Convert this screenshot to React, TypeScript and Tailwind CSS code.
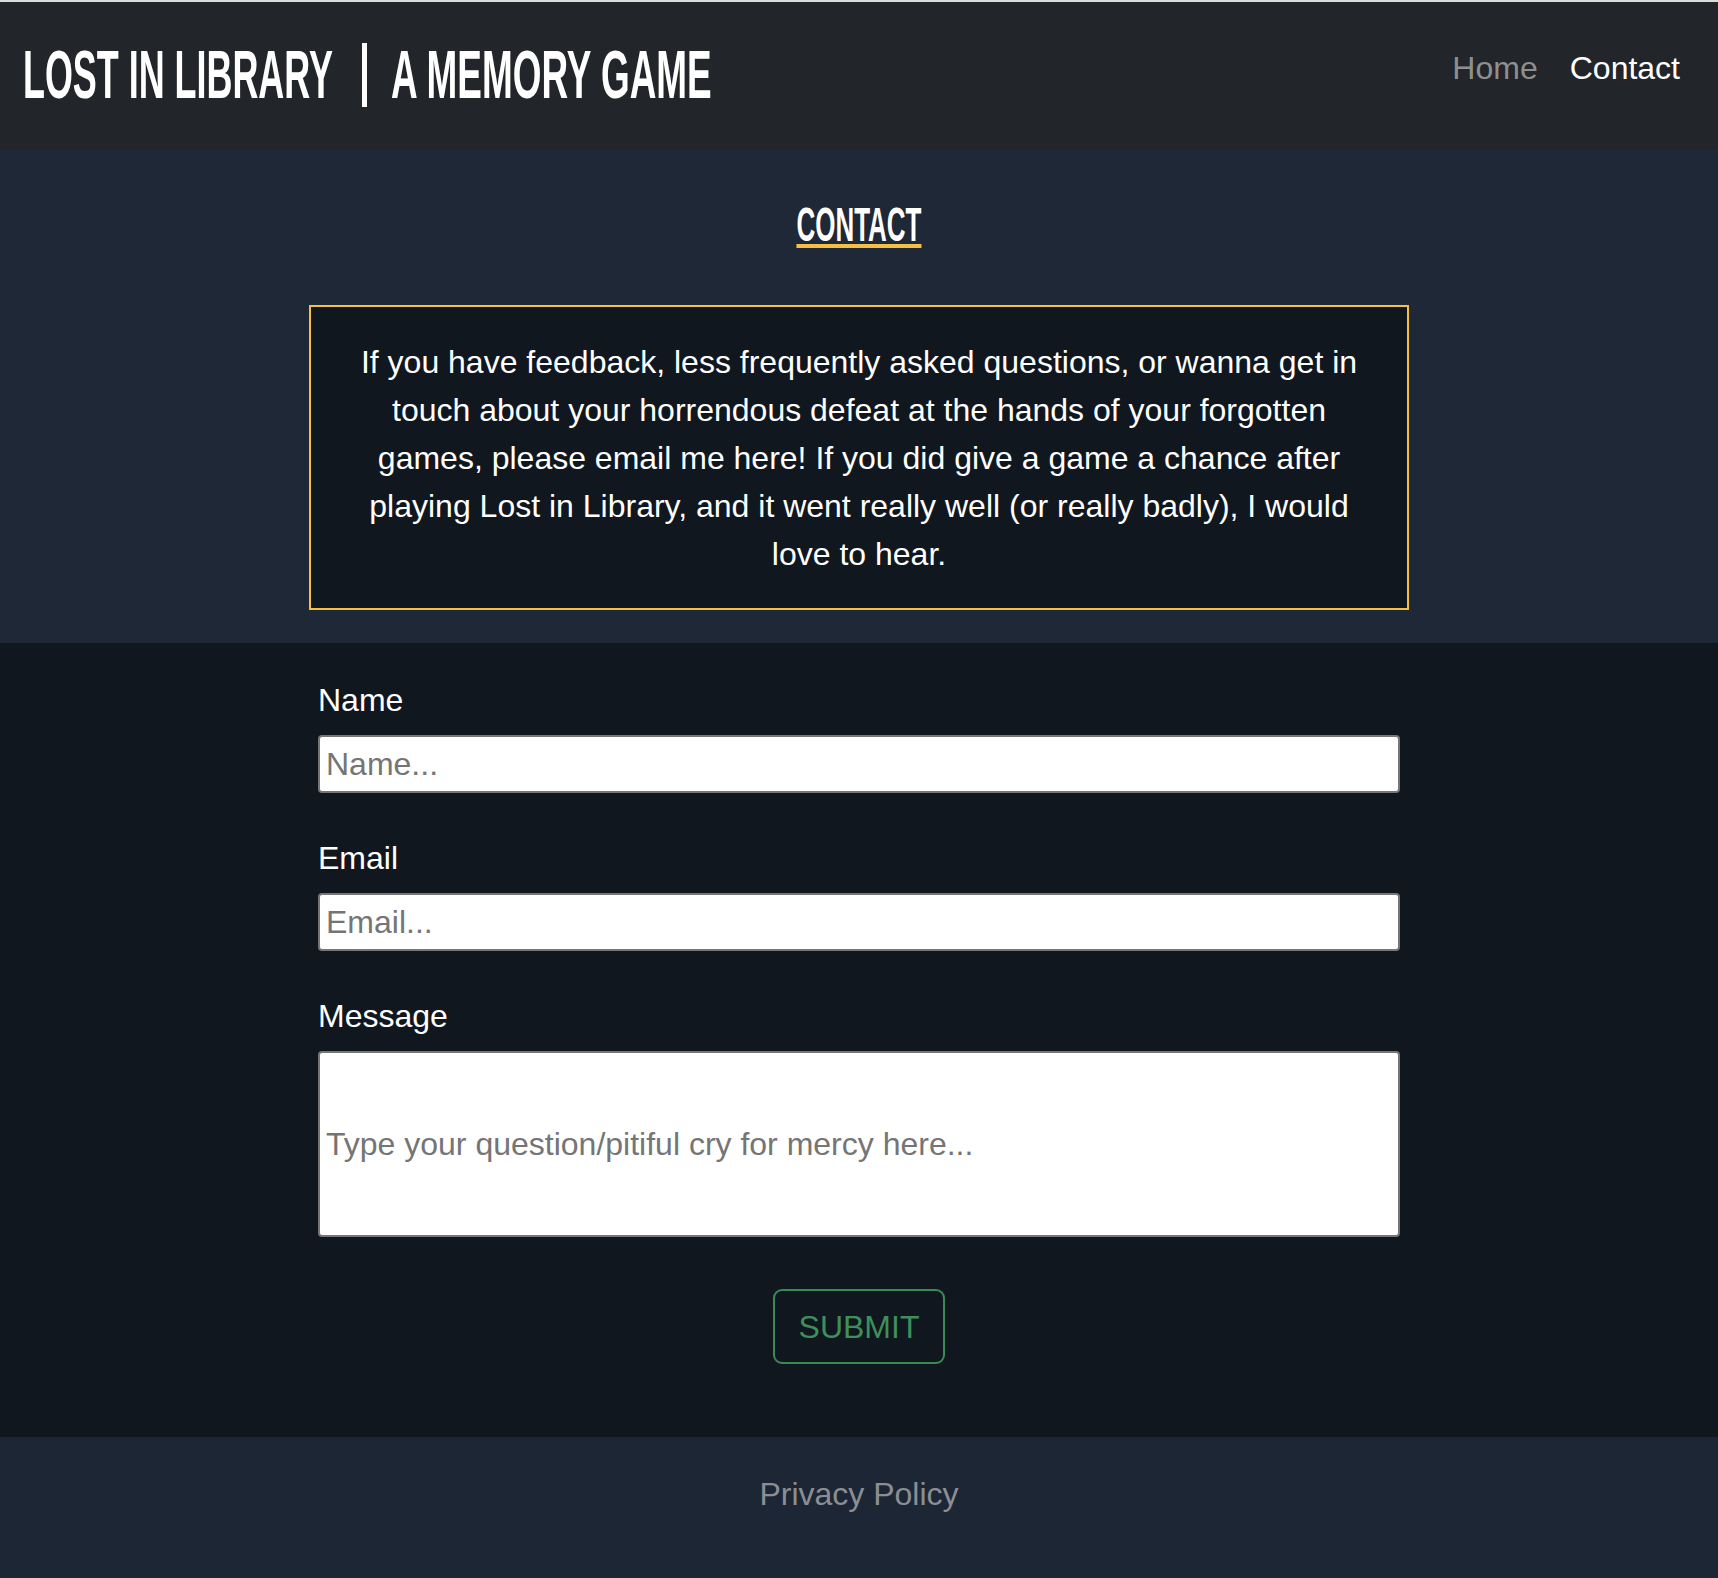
import React from "react";

export default function App() {
  return (
    <div className="font-['Liberation_Sans',Arial,sans-serif] text-white">
      <div className="h-[2px] bg-[#dcdcdc]" />
      <header className="h-[148px] bg-[#222529] flex items-start justify-between pl-[23px] pr-[38px]">
        <div className="flex items-start mt-[38px]">
          <div className="w-[309px] h-[68px]">
            <span className="inline-block origin-left scale-x-[0.528] whitespace-nowrap font-bold text-[68px] leading-[68px]">
              LOST IN LIBRARY
            </span>
          </div>
          <div className="ml-[30px] mt-[3px] w-[5px] h-[64px] bg-white" />
          <div className="ml-[24px] w-[320px] h-[68px]">
            <span className="inline-block origin-left scale-x-[0.543] whitespace-nowrap font-bold text-[68px] leading-[68px]">
              A MEMORY GAME
            </span>
          </div>
        </div>
        <nav className="flex items-start gap-[32px] mt-[42px] text-[32px] leading-[48px]">
          <a className="text-[#8e8f91]">Home</a>
          <a className="text-white">Contact</a>
        </nav>
      </header>

      <section className="bg-[#1e2836] pt-[50px] pb-[33px]">
        <div className="text-center h-[49px]">
          <h1 className="inline-block origin-center scale-x-[0.53] whitespace-nowrap font-bold text-[49px] leading-[49px] underline decoration-[#f4bf42] decoration-[4px] underline-offset-[3px]">
            CONTACT
          </h1>
        </div>
        <div className="mt-[56px] mx-auto w-[1100px] border-2 border-[#f4bf42] bg-[#10171f] px-[32px] pt-[31px] pb-[30px] text-center text-[32px] leading-[48px]">
          If you have feedback, less frequently asked questions, or wanna get in touch about your horrendous defeat at the hands of your forgotten games, please email me here! If you did give a game a chance after playing Lost in Library, and it went really well (or really badly), I would love to hear.
        </div>
      </section>

      <section className="bg-[#10171f] pt-[34px] pb-[73px]">
        <form className="w-[1082px] mx-auto flex flex-col" onSubmit={(e) => e.preventDefault()}>
          <label className="block text-[32px] leading-[46px] mb-[12px]">Name</label>
          <input
            type="text"
            placeholder="Name..."
            className="h-[58px] w-full bg-white border-2 border-[#767676] rounded-[4px] pl-[6px] text-[32px] text-black placeholder:text-[#757575] outline-none"
          />
          <label className="block text-[32px] leading-[46px] mb-[12px] mt-[42px]">Email</label>
          <input
            type="text"
            placeholder="Email..."
            className="h-[58px] w-full bg-white border-2 border-[#767676] rounded-[4px] pl-[6px] text-[32px] text-black placeholder:text-[#757575] outline-none"
          />
          <label className="block text-[32px] leading-[46px] mb-[12px] mt-[42px]">Message</label>
          <input
            type="text"
            placeholder="Type your question/pitiful cry for mercy here..."
            className="h-[186px] w-full bg-white border-2 border-[#767676] rounded-[4px] pl-[6px] text-[32px] text-black placeholder:text-[#757575] outline-none"
          />
          <div className="flex justify-center mt-[52px]">
            <button
              type="submit"
              className="h-[75px] px-[24px] border-2 border-[#3b8a56] rounded-[9px] bg-transparent text-[#3f8f5b] text-[32px] leading-none"
            >
              SUBMIT
            </button>
          </div>
        </form>
      </section>

      <footer className="bg-[#1c2634] h-[141px] pt-[33px] text-center">
        <a className="text-[32px] leading-[48px] text-[#8b8e94]">Privacy Policy</a>
      </footer>
    </div>
  );
}
